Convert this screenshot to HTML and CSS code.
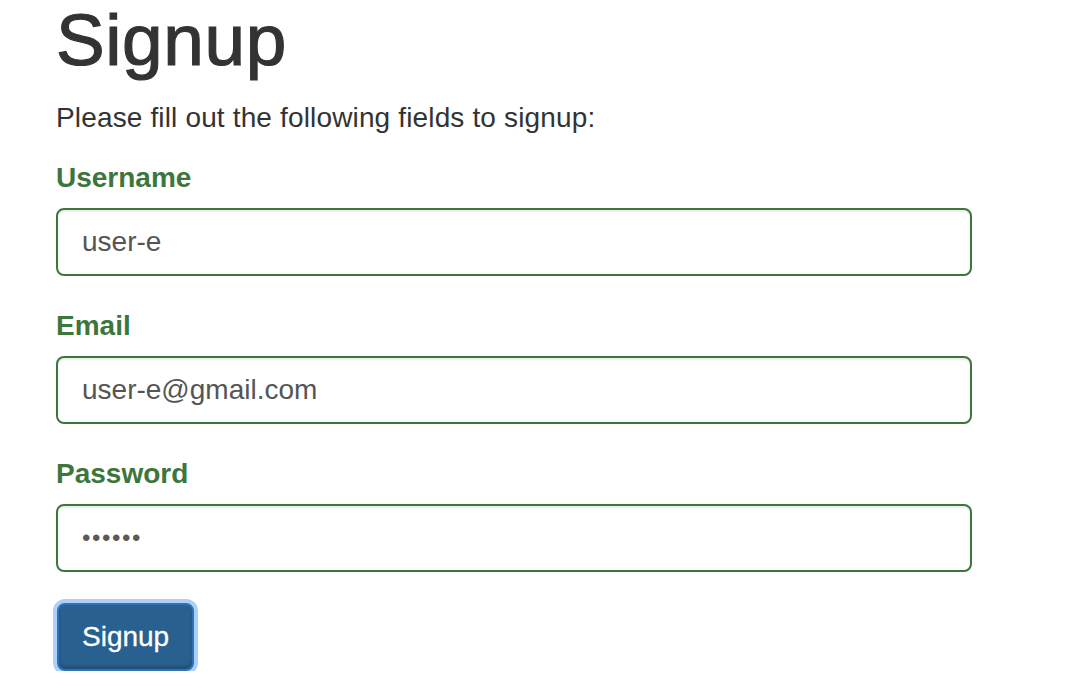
FILE: index.html
```html
<!DOCTYPE html>
<html>
<head>
<meta charset="utf-8">
<link rel="stylesheet" href="styles.css">
</head>
<body>
<div class="site-signup">
  <h1 class="title">Signup</h1>
  <p class="intro">Please fill out the following fields to signup:</p>
  <form class="form">
    <div class="form-group">
      <label class="label">Username</label>
      <div class="input">user-e</div>
    </div>
    <div class="form-group">
      <label class="label">Email</label>
      <div class="input">user-e@gmail.com</div>
    </div>
    <div class="form-group">
      <label class="label">Password</label>
      <div class="input dots">••••••</div>
    </div>
    <div class="actions">
      <button type="button" class="btn">Signup</button>
    </div>
  </form>
</div>
</body>
</html>
```
FILE: styles.css
```css
html, body {
  margin: 0;
  padding: 0;
  background: #fff;
}
body {
  font-family: "Liberation Sans", Arial, Helvetica, sans-serif;
  font-size: 28px;
  line-height: 40px;
  color: #333;
}
.site-signup {
  padding-left: 56px;
  width: 916px;
}
.title {
  margin: 0 0 19px;
  font-size: 73px;
  line-height: 79px;
  font-weight: 500;
  color: #333;
  -webkit-text-stroke: 1.2px #333;
  letter-spacing: 0.6px;
}
.intro {
  margin: 0 0 20px;
  letter-spacing: 0.15px;
}
.form-group {
  margin-bottom: 30px;
}
.label {
  display: block;
  font-weight: bold;
  color: #3c763d;
  margin-bottom: 10px;
  line-height: 40px;
}
.input {
  box-sizing: border-box;
  height: 68px;
  padding: 12px 24px;
  border: 2px solid #3c763d;
  border-radius: 8px;
  box-shadow: inset 0 2px 2px rgba(0,0,0,.075);
  color: #555;
  line-height: 40px;
  background: #fff;
}
.dots {
  font-size: 24px;
  letter-spacing: 1.6px;
  color: #5a5a5a;
}
.actions {
  display: flex;
}
.btn {
  box-sizing: border-box;
  height: 68px;
  margin-left: 1px;
  margin-top: 1px;
  padding: 0 23px 0 23px;
  font-family: inherit;
  font-size: 28px;
  line-height: 40px;
  color: #fff;
  -webkit-text-stroke: 0.3px #fff;
  background: #286090;
  border: 2px solid #2f72b8;
  border-radius: 8px;
  box-shadow: 0 0 0 4px #acd0fa, inset 0 -3px 3px rgba(0,0,0,.18);
}
```
